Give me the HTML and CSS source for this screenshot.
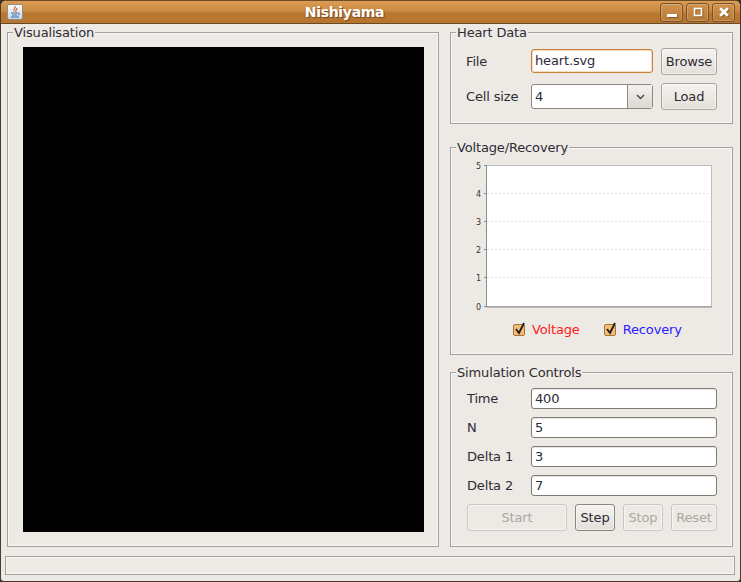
FILE: index.html
```html
<!DOCTYPE html>
<html lang="en">
<head>
    <meta charset="UTF-8">
    <meta name="viewport" content="width=device-width, initial-scale=1.0">
    <title>Nishiyama</title>
    <link rel="stylesheet" href="styles.css">
</head>
<body>
    <div class="window">
        <div class="titlebar">
            <div class="app-icon">
                <svg width="14" height="14" viewBox="0 0 14 14">
                    <path d="M7 1c1 2-2 3-1 5M9 3c0 2-2 2-1 4" fill="none" stroke="#d8602a" stroke-width="1.2"/>
                    <path d="M3 8h7M4 10h5M3 12h8" stroke="#3a6ea5" stroke-width="1.1"/>
                    <path d="M10 8c2 0 2 2 0 2" fill="none" stroke="#3a6ea5"/>
                </svg>
            </div>
            <div class="title">Nishiyama</div>
            <div class="win-buttons">
                <div class="win-btn">
                    <svg width="12" height="12" viewBox="0 0 12 12"><rect x="1" y="8" width="10" height="3" fill="#fff"/></svg>
                </div>
                <div class="win-btn">
                    <svg width="12" height="12" viewBox="0 0 12 12"><rect x="2.500" y="2.500" width="7" height="7" fill="none" stroke="#fff" stroke-width="1.600"/></svg>
                </div>
                <div class="win-btn">
                    <svg width="12" height="12" viewBox="0 0 12 12"><path d="M2.200 2.200l7.600 7.600M9.800 2.200l-7.600 7.600" stroke="#fff" stroke-width="2.800"/></svg>
                </div>
            </div>
        </div>

        <div class="main">
            <div class="group vis-group">
                <span class="group-title">Visualisation</span>
                <div class="canvas"></div>
            </div>

            <div class="side">
                <div class="group heart-group">
                    <span class="group-title">Heart Data</span>
                    <div class="heart-form">
                        <label>File</label>
                        <div class="field focused">heart.svg</div>
                        <button class="btn">Browse</button>
                        <label>Cell size</label>
                        <div class="combo">
                            <span class="combo-value">4</span>
                            <span class="combo-arrow">
                                <svg width="9" height="6" viewBox="0 0 9 6"><path d="M1 1l3.500 3.500L8 1" fill="none" stroke="#4c4c4c" stroke-width="1.500"/></svg>
                            </span>
                        </div>
                        <button class="btn">Load</button>
                    </div>
                </div>

                <div class="group chart-group">
                    <span class="group-title">Voltage/Recovery</span>
                    <svg class="chart" width="262" height="150" viewBox="0 0 262 150">
                        <rect x="35.500" y="1.500" width="225" height="141" fill="#fff" stroke="#bdbdbd"/>
                        <g stroke="#e2e2e2" stroke-dasharray="2 2">
                            <path d="M36 29.500h224M36 57.500h224M36 85.500h224M36 113.500h224"/>
                        </g>
                        <path d="M35.500 1v142H261" fill="none" stroke="#8c8c8c"/>
                        <path d="M33 1.500h3M33 29.500h3M33 57.500h3M33 85.500h3M33 113.500h3M33 142.500h3" stroke="#8c8c8c"/>
                        <g class="tick-labels">
                            <text x="30" y="4.500">5</text>
                            <text x="30" y="32.500">4</text>
                            <text x="30" y="60.500">3</text>
                            <text x="30" y="88.500">2</text>
                            <text x="30" y="116.500">1</text>
                            <text x="30" y="145.500">0</text>
                        </g>
                    </svg>
                    <div class="legend">
                        <span class="check">
                            <svg width="13" height="14" viewBox="0 0 13 14"><path d="M3 7l3 4 5-10" fill="none" stroke="#1c1c1c" stroke-width="1.800"/></svg>
                        </span>
                        <span class="legend-label voltage">Voltage</span>
                        <span class="check">
                            <svg width="13" height="14" viewBox="0 0 13 14"><path d="M3 7l3 4 5-10" fill="none" stroke="#1c1c1c" stroke-width="1.800"/></svg>
                        </span>
                        <span class="legend-label recovery">Recovery</span>
                    </div>
                </div>

                <div class="group sim-group">
                    <span class="group-title">Simulation Controls</span>
                    <div class="sim-form">
                        <label>Time</label>
                        <div class="field">400</div>
                        <label>N</label>
                        <div class="field">5</div>
                        <label>Delta 1</label>
                        <div class="field">3</div>
                        <label>Delta 2</label>
                        <div class="field">7</div>
                    </div>
                    <div class="sim-buttons">
                        <button class="btn btn-start" disabled>Start</button>
                        <button class="btn btn-step">Step</button>
                        <button class="btn btn-stop" disabled>Stop</button>
                        <button class="btn btn-reset" disabled>Reset</button>
                    </div>
                </div>
            </div>
        </div>

        <div class="statusbar"></div>
    </div>
</body>
</html>
```

FILE: styles.css
```css
*{
    box-sizing: border-box;
}
html, body{
    margin: 0;
    padding: 0;
    height: 100%;
    overflow: hidden;
    background: #3b2f25;
}
body{
    font-family: "DejaVu Sans", sans-serif;
    font-size: 13px;
    letter-spacing: -0.15px;
    color: #2e2a34;
}
.window{
    width: 741px;
    height: 582px;
    display: flex;
    flex-direction: column;
    background: #edeae5;
    border-radius: 6px 6px 4px 4px;
    border: 1px solid #4a3a2b;
    border-top-color: #6d4c28;
    overflow: hidden;
}
.titlebar{
    height: 23px;
    flex: none;
    display: flex;
    align-items: center;
    padding: 0 5px 0 6px;
    background: linear-gradient(#dc9c55, #c98a41 45%, #ba7730 55%, #b87530);
    border-bottom: 1px solid #6b4a26;
}
.app-icon{
    width: 16px;
    height: 16px;
    flex: none;
    display: flex;
    align-items: center;
    justify-content: center;
    background: linear-gradient(#fbfbfb, #c8d6e6);
    border: 1px solid #8e8e8e;
    border-radius: 2px;
}
.title{
    flex: 1;
    padding-left: 6px;
    text-align: center;
    color: #fff;
    font-weight: bold;
    font-size: 14px;
    letter-spacing: -0.3px;
    line-height: 16px;
    text-shadow: 1px 1px 1px #6d4a22;
}
.win-buttons{
    flex: none;
    display: flex;
    gap: 3px;
}
.win-btn{
    width: 23px;
    height: 19px;
    display: flex;
    align-items: center;
    justify-content: center;
    border: 1px solid #7a5227;
    border-radius: 3px;
    background: linear-gradient(#cf9450, #b97a35);
    box-shadow: inset 0 0 0 1px rgba(255, 255, 255, 0.2);
}
.win-btn svg{
    filter: drop-shadow(1px 1px 0 rgba(90, 55, 20, 0.5));
}
.main{
    flex: 1;
    display: flex;
    gap: 11px;
    padding: 8px 6px 0 6px;
}
.group{
    position: relative;
    border: 1px solid #a3a19d;
    box-shadow: 0 0 0 1px #f8f7f5 inset;
}
.group-title{
    position: absolute;
    left: 5px;
    top: -8px;
    padding: 0 1px;
    line-height: 15px;
    background: #edeae5;
}
.vis-group{
    width: 432px;
    height: 515px;
    padding: 14px 14px 0 15px;
}
.canvas{
    width: 401px;
    height: 485px;
    background: #000;
}
.side{
    width: 283px;
    display: flex;
    flex-direction: column;
}
.heart-group{
    height: 92px;
    margin-bottom: 23px;
    padding: 15px 15px 0 15px;
}
.heart-form{
    display: grid;
    grid-template-columns: 57px 122px 56px;
    grid-template-rows: 26px 27px;
    column-gap: 8px;
    row-gap: 9px;
    align-items: center;
}
.heart-form label{
    white-space: nowrap;
}
.field{
    height: 21px;
    line-height: 19px;
    padding: 0 3px;
    background: #fff;
    border: 1px solid #7f7a72;
    border-radius: 3px;
    box-shadow: inset 0 1px 1px rgba(0, 0, 0, 0.1);
}
.field.focused{
    height: 24px;
    line-height: 22px;
    border-color: #c97f35;
    box-shadow: inset 0 0 0 1px rgba(230, 170, 100, 0.4);
}
.combo{
    height: 25px;
    display: flex;
    background: #fff;
    border: 1px solid #8b8780;
    border-radius: 3px;
}
.combo-value{
    flex: 1;
    line-height: 23px;
    padding: 0 3px;
}
.combo-arrow{
    width: 25px;
    display: flex;
    align-items: center;
    justify-content: center;
    border-left: 1px solid #8b8780;
    background: linear-gradient(#f3f1ee, #dcd8d2);
}
.btn{
    font-family: inherit;
    font-size: 13px;
    letter-spacing: inherit;
    color: #2e2a34;
    padding: 0;
    height: 27px;
    background: linear-gradient(#f5f3f0, #e3e0da);
    border: 1px solid #a9a59e;
    border-radius: 3px;
    box-shadow: inset 0 0 0 1px rgba(255, 255, 255, 0.5);
}
.btn:disabled{
    color: #aaa7a2;
    background: #edeae5;
    border-color: #c9c6c1;
}
.chart-group{
    height: 208px;
    margin-bottom: 17px;
    padding-top: 16px;
}
.chart{
    display: block;
    overflow: visible;
}
.tick-labels text{
    font-family: "DejaVu Sans", sans-serif;
    font-size: 8px;
    letter-spacing: 0;
    text-anchor: end;
    fill: #333;
}
.legend{
    display: flex;
    align-items: center;
    margin-top: 8px;
    padding-left: 62px;
}
.check{
    width: 12px;
    height: 12px;
    position: relative;
    background: #f5bd73;
    border: 1px solid #a5763c;
    border-radius: 2px;
}
.check svg{
    position: absolute;
    left: -1px;
    top: -3px;
}
.legend-label{
    margin-left: 7px;
    margin-right: 24px;
}
.voltage{
    color: #ff1a1a;
}
.recovery{
    color: #2a1aff;
}
.sim-group{
    height: 175px;
    padding: 15px 15px 0 16px;
}
.sim-form{
    display: grid;
    grid-template-columns: 64px 186px;
    row-gap: 8px;
    align-items: center;
}
.sim-buttons{
    display: flex;
    gap: 8px;
    margin-top: 8px;
}
.btn-start{
    width: 100px;
}
.btn-step, .btn-stop{
    width: 40px;
}
.btn-step{
    border-color: #8a8680;
}
.btn-reset{
    width: 46px;
}
.statusbar{
    flex: none;
    height: 19px;
    margin: 9px 5px 6px 4px;
    border: 1px solid #a3a19d;
    box-shadow: 0 0 0 1px #f8f7f5 inset;
}
```
